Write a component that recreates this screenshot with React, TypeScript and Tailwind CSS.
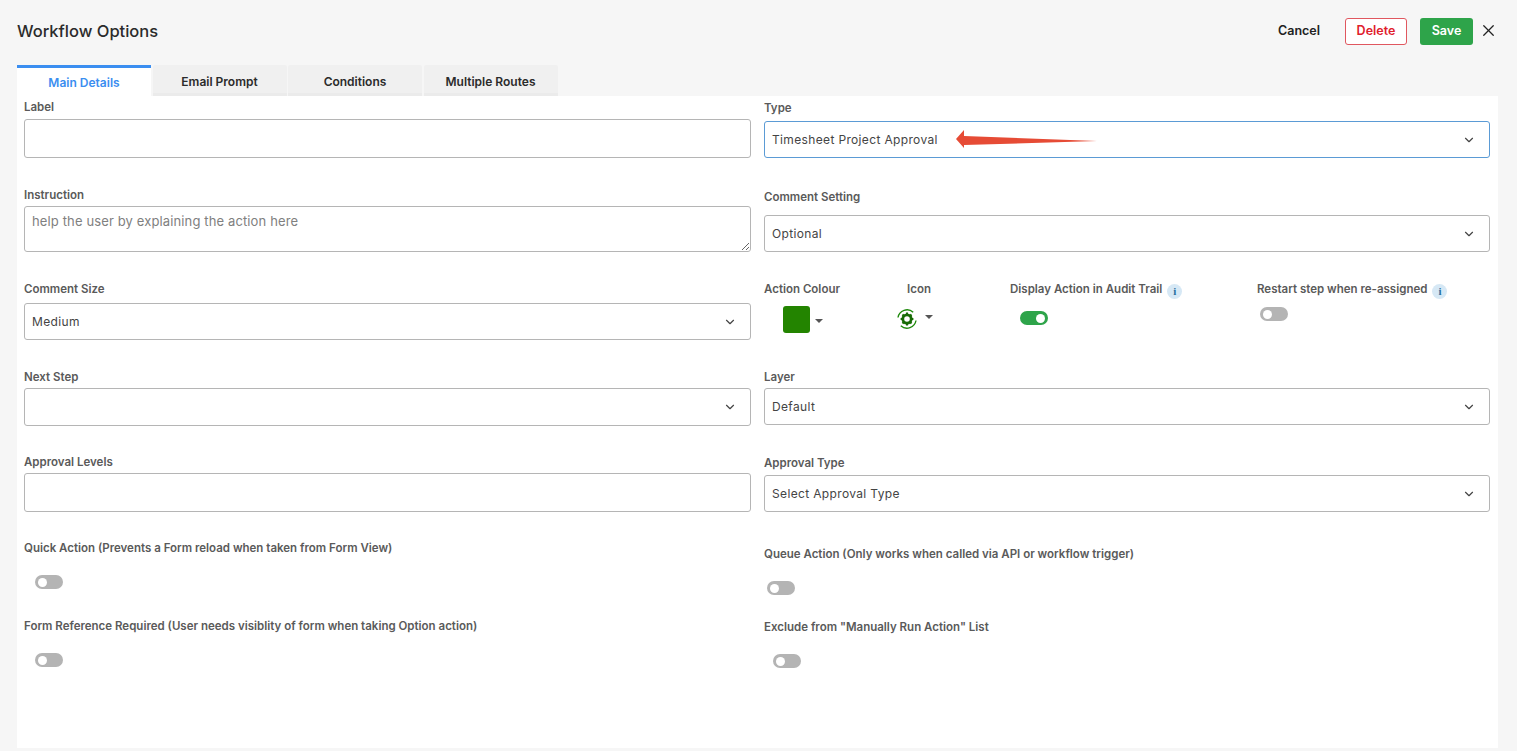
import { ChevronDown, X } from "lucide-react";

const labelClass = "block h-[14px] text-[11.5px] leading-[16px] font-semibold text-[#5a5a5a]";
const boxClass = "w-full rounded-[3px] border border-[#b5b5b5] bg-white";

function Label({ children, className = "" }: { children: React.ReactNode; className?: string }) {
  return <span className={`${labelClass} ${className}`}>{children}</span>;
}

function Select({ value, className = "" }: { value?: string; className?: string }) {
  return (
    <div className={`flex items-center justify-between pl-[7px] pr-[13px] text-[12px] tracking-[0.35px] text-[#444] ${boxClass} ${className}`}>
      <span>{value}</span>
      <ChevronDown size={14} strokeWidth={2} className="text-[#444]" />
    </div>
  );
}

function Toggle({ on = false, className = "" }: { on?: boolean; className?: string }) {
  return (
    <div
      className={`flex h-[14px] w-[28px] items-center rounded-full px-[3px] ${on ? "justify-end bg-[#2ea44a]" : "justify-start bg-[#b4b4b4]"} ${className}`}
    >
      <span className="h-[9px] w-[9px] rounded-full bg-white" />
    </div>
  );
}

function Caret({ className = "" }: { className?: string }) {
  return <span className={`h-0 w-0 border-x-[4px] border-t-[4px] border-x-transparent border-t-[#555] ${className}`} />;
}

function Info({ className = "" }: { className?: string }) {
  return (
    <span
      className={`flex h-[15px] w-[15px] items-center justify-center rounded-full bg-[#d6e8f5] font-['Liberation_Serif',serif] text-[11px] font-bold text-[#2a6f9e] ${className}`}
    >
      i
    </span>
  );
}

function GearIcon() {
  return (
    <svg width="22" height="24" viewBox="0 0 22 24" fill="none">
      <path d="M2 10.5A9.2 9.2 0 0 1 17.2 5.2M20 13.5A9.2 9.2 0 0 1 4.8 18.8" stroke="#1f8a0c" strokeWidth="1.4" />
      <circle cx="11" cy="12" r="4.2" stroke="#176b05" strokeWidth="2.8" />
      <path
        d="M11 5.6v2M11 16.4v2M4.6 12h2M15.4 12h2M6.5 7.5l1.4 1.4M14.1 15.1l1.4 1.4M15.5 7.5L14.1 8.9M7.9 15.1l-1.4 1.4"
        stroke="#176b05"
        strokeWidth="2.1"
      />
    </svg>
  );
}

const tabs = ["Email Prompt", "Conditions", "Multiple Routes"];

export default function App() {
  return (
    <div className="h-[751px] w-[1517px] overflow-hidden bg-[#f6f6f6] font-['Inter',sans-serif]">
      <header className="flex h-[65px] items-start pl-[17px]">
        <h1 className="mt-[20px] text-[16.5px] leading-[22px] font-medium text-[#2b2b2b]">Workflow Options</h1>
        <div className="ml-auto mt-[18px] flex items-center">
          <button className="mr-[25px] text-[12.5px] font-semibold text-[#222]">Cancel</button>
          <button className="mr-[13px] h-[27px] w-[62px] rounded-[3px] border border-[#e0575f] bg-white text-[12.5px] font-semibold text-[#e0202c]">
            Delete
          </button>
          <button className="h-[27px] w-[53px] rounded-[3px] bg-[#2ea44a] text-[12.5px] font-semibold text-white">Save</button>
          <X size={19} strokeWidth={1.6} className="mb-[3px] ml-[6px] mr-[19px] text-[#222]" />
        </div>
      </header>

      <nav className="ml-[17px] flex h-[31px] gap-[1.5px] text-[12px] font-semibold">
        <div className="flex w-[134px] items-center justify-center border-t-[3px] border-[#3b8ef0] bg-white pt-[1px] text-[#3b8ef0]">
          Main Details
        </div>
        {tabs.map((tab) => (
          <div
            key={tab}
            className="flex w-[134px] items-center justify-center rounded-t-[2px] border-b-[3px] border-[#ebebeb] bg-[#f0f0f0] pt-[5px] text-[#2b2b2b]"
          >
            {tab}
          </div>
        ))}
      </nav>

      <main className="relative ml-[17px] flex h-[652px] w-[1481px] gap-[13px] bg-white px-[7px] pt-[3px]">
        <section className="flex w-[727px] flex-col">
          <Label>Label</Label>
          <input className={`mt-[6px] h-[39px] ${boxClass}`} />

          <Label className="mt-[29px]">Instruction</Label>
          <textarea
            readOnly
            placeholder="help the user by explaining the action here"
            className={`mt-[5px] h-[46px] px-[7px] py-[5px] text-[13px] leading-[18px] tracking-[0.13px] placeholder:text-[#808080] ${boxClass}`}
          />

          <Label className="mt-[29px]">Comment Size</Label>
          <Select value="Medium" className="mt-[8px] h-[37px]" />

          <Label className="mt-[29px]">Next Step</Label>
          <Select className="mt-[5px] h-[38px]" />

          <Label className="mt-[28px]">Approval Levels</Label>
          <input className={`mt-[5px] h-[39px] ${boxClass}`} />

          <Label className="mt-[28px]">Quick Action (Prevents a Form reload when taken from Form View)</Label>
          <Toggle className="ml-[11px] mt-[21px]" />

          <Label className="mt-[29px]">Form Reference Required (User needs visiblity of form when taking Option action)</Label>
          <Toggle className="ml-[11px] mt-[21px]" />
        </section>

        <section className="flex w-[726px] flex-col">
          <Label className="mt-[1px]">Type</Label>
          <Select value="Timesheet Project Approval" className="mt-[7px] h-[37px] !border-[#5b9bd5]" />

          <Label className="mt-[31px]">Comment Setting</Label>
          <Select value="Optional" className="mt-[12px] h-[37px]" />

          <div className="mt-[29px] flex h-[59px]">
            <div className="flex w-[246px]">
              <div className="w-[120px]">
                <Label>Action Colour</Label>
                <div className="ml-[19px] mt-[11px] flex items-center gap-[5px]">
                  <span className="h-[27px] w-[27px] rounded-[3px] bg-[#238400]" />
                  <Caret className="mt-[3px]" />
                </div>
              </div>
              <div className="w-[60px]">
                <Label className="ml-[23px]">Icon</Label>
                <div className="ml-[12px] mt-[12px] flex items-start gap-[7px]">
                  <GearIcon />
                  <span className="mt-[8px] flex">
                    <Caret />
                  </span>
                </div>
              </div>
            </div>
            <div className="w-[247px]">
              <div className="flex items-start gap-[5px]">
                <Label>Display Action in Audit Trail</Label>
                <Info className="mt-[3px]" />
              </div>
              <Toggle on className="ml-[10px] mt-[12px]" />
            </div>
            <div>
              <div className="flex items-start gap-[5px]">
                <Label>Restart step when re-assigned</Label>
                <Info className="mt-[3px]" />
              </div>
              <Toggle className="ml-[3px] mt-[8px]" />
            </div>
          </div>

          <Label className="mt-[29px]">Layer</Label>
          <Select value="Default" className="mt-[5px] h-[37px]" />

          <Label className="mt-[30px]">Approval Type</Label>
          <Select value="Select Approval Type" className="mt-[6px] h-[37px]" />

          <Label className="mt-[34px]">Queue Action (Only works when called via API or workflow trigger)</Label>
          <Toggle className="ml-[3px] mt-[21px]" />

          <Label className="mt-[24px]">Exclude from "Manually Run Action" List</Label>
          <Toggle className="ml-[9px] mt-[21px]" />
        </section>

        {/* annotation arrow drawn over the Type field */}
        <svg className="absolute left-[937px] top-[32px]" width="144" height="22" viewBox="0 0 144 22">
          <path d="M2 11 L10 2 L10 8 L143 13 L10 17 L10 20 Z" fill="#e64b35" />
        </svg>
      </main>
    </div>
  );
}
